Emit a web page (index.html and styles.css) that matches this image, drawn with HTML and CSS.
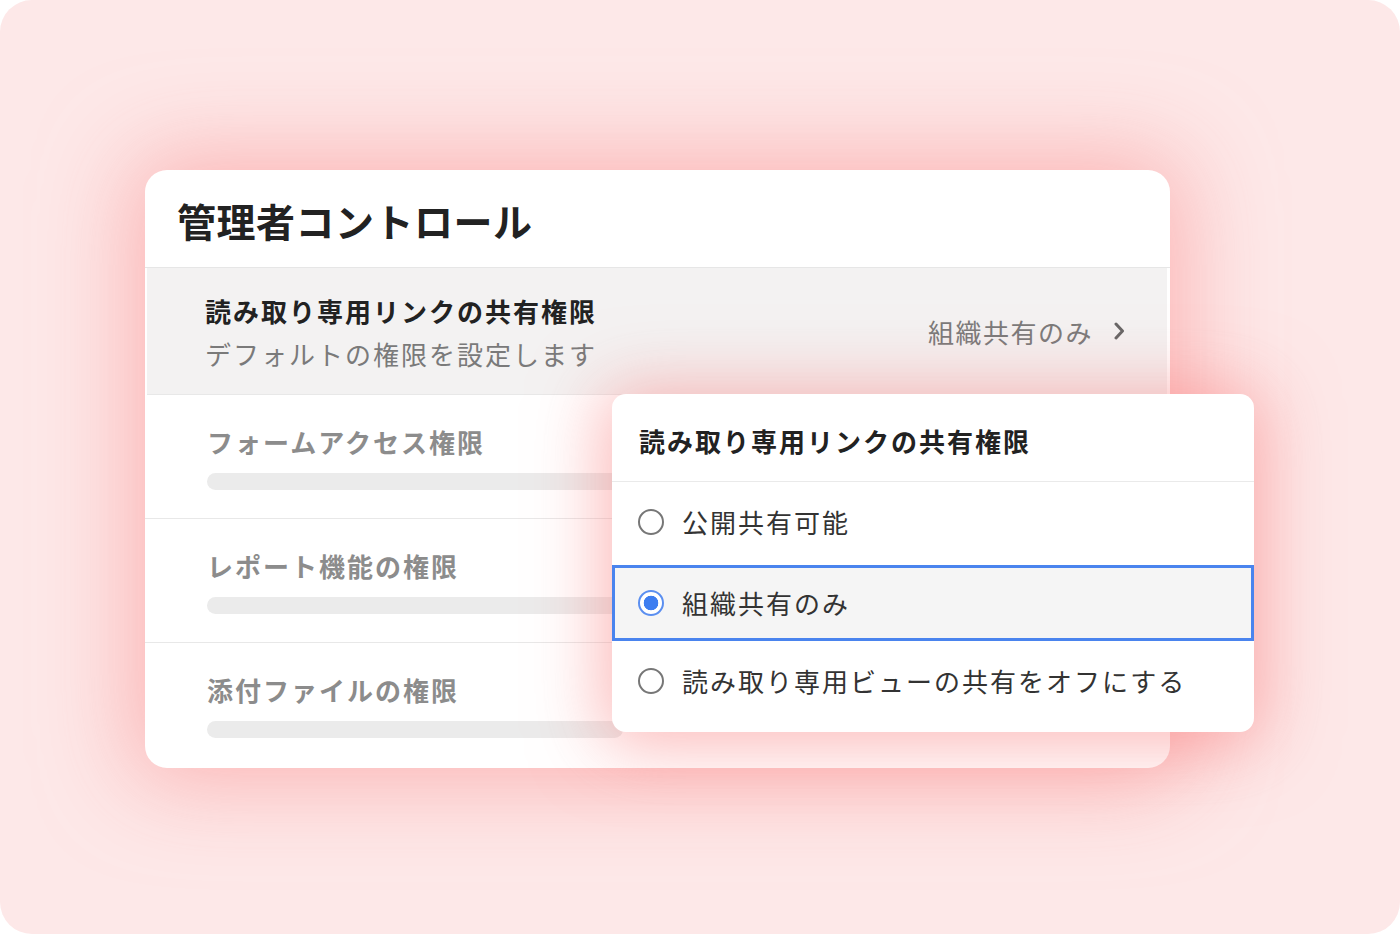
FILE: index.html
```html
<!DOCTYPE html>
<html lang="ja">
<head>
<meta charset="utf-8">
<title>管理者コントロール</title>
<link rel="stylesheet" href="styles.css">
</head>
<body>
<div class="frame">
  <div class="card">
    <div class="card-header">
      <h1 class="title">管理者コントロール</h1>
    </div>
    <div class="row row-active">
      <div class="row-text">
        <div class="row-title">読み取り専用リンクの共有権限</div>
        <div class="row-sub">デフォルトの権限を設定します</div>
      </div>
      <div class="row-value">
        <span>組織共有のみ</span>
        <svg class="chevron" width="12" height="18" viewBox="0 0 12 18"><path d="M3 2 L9.5 9 L3 16" fill="none" stroke="#666" stroke-width="3" stroke-linecap="round" stroke-linejoin="round"/></svg>
      </div>
    </div>
    <div class="row row-muted">
      <div class="muted-label">フォームアクセス権限</div>
      <div class="skeleton"></div>
    </div>
    <div class="row row-muted">
      <div class="muted-label">レポート機能の権限</div>
      <div class="skeleton"></div>
    </div>
    <div class="row row-muted row-last">
      <div class="muted-label">添付ファイルの権限</div>
      <div class="skeleton"></div>
    </div>

    <div class="popup">
      <div class="popup-header">読み取り専用リンクの共有権限</div>
      <div class="options">
        <div class="option">
          <span class="radio"></span>
          <span class="option-label">公開共有可能</span>
        </div>
        <div class="option option-selected">
          <span class="radio radio-on"></span>
          <span class="option-label">組織共有のみ</span>
        </div>
        <div class="option">
          <span class="radio"></span>
          <span class="option-label">読み取り専用ビューの共有をオフにする</span>
        </div>
      </div>
    </div>
  </div>
</div>
</body>
</html>
```

FILE: styles.css
```css
* { box-sizing: border-box; }
html, body {
  margin: 0;
  padding: 0;
  background: #ffffff;
}
body {
  font-family: "Noto Sans CJK JP", "Noto Sans", sans-serif;
  width: 1400px;
  height: 934px;
  overflow: hidden;
}
.frame {
  width: 1400px;
  height: 934px;
  border-radius: 32px;
  background: #fde8e8;
  padding: 170px 0 0 145px;
  overflow: hidden;
}
.card {
  position: relative;
  width: 1025px;
  height: 598px;
  background: #ffffff;
  border-radius: 22px;
  box-shadow: 0 0 90px 14px rgba(252, 145, 145, 0.6);
  display: flex;
  flex-direction: column;
}
.card-header {
  height: 98px;
  padding: 22px 0 0 32px;
  border-bottom: 1px solid #e6e6e6;
}
.title {
  margin: 0;
  font-size: 39px;
  line-height: 56px;
  font-weight: 700;
  color: #222;
  letter-spacing: 0.5px;
}
.row {
  border-bottom: 1px solid #e8e8e8;
}
.row-active {
  height: 127px;
  margin: 0 3px 0 2px;
  background: #f3f2f2;
  display: flex;
  align-items: center;
  justify-content: space-between;
  padding: 0 42px 0 58px;
}
.row-text {
  display: flex;
  flex-direction: column;
  padding-top: 4px;
}
.row-title {
  font-size: 26px;
  line-height: 42px;
  font-weight: 700;
  color: #222;
  letter-spacing: 2px;
}
.row-sub {
  font-size: 26px;
  line-height: 44px;
  color: #7a7a7a;
  letter-spacing: 2px;
}
.row-value {
  display: flex;
  align-items: center;
  gap: 20px;
  font-size: 26px;
  color: #7a7a7a;
  letter-spacing: 1.5px;
}
.chevron { display: block; }
.row-muted {
  height: 124px;
  padding: 29px 0 0 62px;
}
.row-last { border-bottom: none; }
.muted-label {
  font-size: 26px;
  line-height: 36px;
  font-weight: 700;
  color: #8c8c8c;
  letter-spacing: 2px;
}
.skeleton {
  margin-top: 13px;
  width: 416px;
  height: 17px;
  border-radius: 9px;
  background: #ebebeb;
}
.popup {
  position: absolute;
  left: 467px;
  top: 224px;
  width: 642px;
  height: 338px;
  background: #ffffff;
  border-radius: 14px;
  box-shadow: 0 4px 70px 10px rgba(250, 125, 125, 0.55);
  overflow: hidden;
}
.popup-header {
  height: 88px;
  padding: 27px 0 0 27px;
  font-size: 26px;
  line-height: 40px;
  font-weight: 700;
  color: #222;
  letter-spacing: 2px;
  border-bottom: 1px solid #eaeaea;
}
.options {
  display: flex;
  flex-direction: column;
}
.option {
  height: 80px;
  display: flex;
  align-items: center;
  gap: 18px;
  padding-left: 23px;
  border: 3px solid transparent;
}
.option-first { height: 84px; }
.option-selected {
  background: #f5f5f5;
  border-color: #4a84ee;
  height: 76px;
  margin-top: 3px;
}
.option-label {
  font-size: 26px;
  color: #333;
  letter-spacing: 2px;
  line-height: 36px;
}
.radio {
  width: 26px;
  height: 26px;
  border-radius: 50%;
  border: 2px solid #777;
  flex: none;
}
.radio-on {
  border-color: #5b8ff0;
  background: radial-gradient(circle, #3d7df0 0 7px, #ffffff 7.6px);
}
```
